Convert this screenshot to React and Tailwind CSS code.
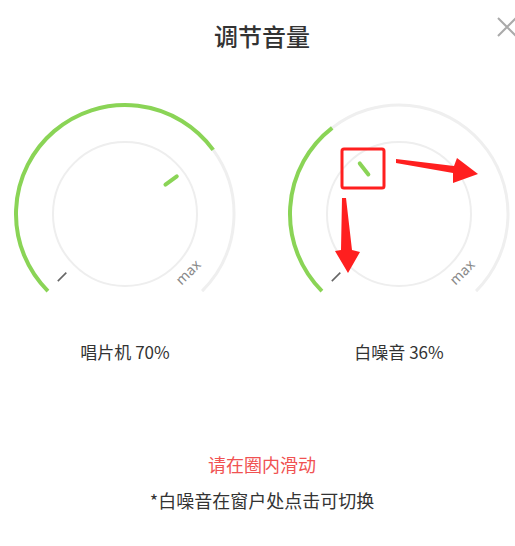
import React from "react";

const GREEN = "#8ad456";
const CX = 115;
const CY = 115;

// angle in degrees, clockwise from 12 o'clock
const polar = (deg, r) => {
    const a = (deg * Math.PI) / 180;
    return [CX + r * Math.sin(a), CY - r * Math.cos(a)];
};

const arc = (from, to, r) => {
    const [x1, y1] = polar(from, r);
    const [x2, y2] = polar(to, r);
    const large = to - from > 180 ? 1 : 0;
    return `M ${x1} ${y1} A ${r} ${r} 0 ${large} 1 ${x2} ${y2}`;
};

const Dial = ({ value }) => {
    const end = -135 + 270 * value;
    const [k1x, k1y] = polar(end, 50);
    const [k2x, k2y] = polar(end, 64);
    const [m1x, m1y] = polar(-135, 83);
    const [m2x, m2y] = polar(-135, 95);

    return (
        <svg width="230" height="200" viewBox="0 0 230 200">
            <path d={arc(end, 135, 109)} fill="none" stroke="#efefef" strokeWidth="3" />
            <path d={arc(-135, end, 109)} fill="none" stroke={GREEN} strokeWidth="4" />
            <circle cx={CX} cy={CY} r="72" fill="none" stroke="#eeeeee" strokeWidth="2" />
            <line x1={k1x} y1={k1y} x2={k2x} y2={k2y} stroke={GREEN} strokeWidth="4" strokeLinecap="round" />
            <line x1={m1x} y1={m1y} x2={m2x} y2={m2y} stroke="#666" strokeWidth="1.6" />
            <text
                x={CX + 64}
                y={CY + 59}
                fill="#888"
                fontSize="14"
                textAnchor="middle"
                dominantBaseline="middle"
                transform={`rotate(-45 ${CX + 64} ${CY + 59})`}
                style={{ fontFamily: '"Noto Sans", sans-serif' }}
            >
                max
            </text>
        </svg>
    );
};

const App = () => {
    const channels = [
        { name: "唱片机", value: 0.7 },
        { name: "白噪音", value: 0.36 },
    ];

    return (
        <div className="w-[515px] h-[546px] overflow-hidden bg-white">
            <div
                className="relative w-[524px] flex flex-col text-[#333]"
                style={{ fontFamily: '"Noto Sans CJK SC", "Noto Sans", sans-serif' }}
            >
                {/* HEADER */}
                <div className="relative h-[72px] flex items-center justify-center">
                    <h1 className="text-[24px] leading-[32px] font-medium text-[#333]">调节音量</h1>
                    <svg className="absolute right-[6px] top-[16px]" width="22" height="22" viewBox="0 0 22 22">
                        <path d="M2 2 L20 20 M20 2 L2 20" stroke="#aaa" strokeWidth="2" />
                    </svg>
                </div>

                {/* DIALS */}
                <div className="mt-[26.5px] flex justify-center gap-[44px]">
                    {channels.map((c) => (
                        <div key={c.name} className="w-[230px] flex flex-col items-center">
                            <Dial value={c.value} />
                            <p className="mt-[41.5px] text-[17px] leading-[24px] text-[#333]">
                                {c.name} {Math.round(c.value * 100)}%
                            </p>
                        </div>
                    ))}
                </div>

                {/* HINTS */}
                <p className="mt-[87px] text-center text-[18px] leading-[26px] text-[#f05252]">请在圈内滑动</p>
                <p className="mt-[10px] text-center text-[18px] leading-[26px] text-[#333]">*白噪音在窗户处点击可切换</p>

                {/* ANNOTATIONS */}
                <svg className="absolute inset-0 pointer-events-none" width="524" height="546" viewBox="0 0 524 546">
                    <rect x="342" y="149" width="42" height="39" rx="2" fill="none" stroke="#ff1f1f" strokeWidth="3" />
                    <polygon points="396,159 454,166 457,158 478,174 453,183 453,173 396,163" fill="#ff1f1f" />
                    <polygon points="342,198 346,198 352,250 360,252 348,273 335,251 341,250" fill="#ff1f1f" />
                </svg>
            </div>
        </div>
    );
};

export default App;
